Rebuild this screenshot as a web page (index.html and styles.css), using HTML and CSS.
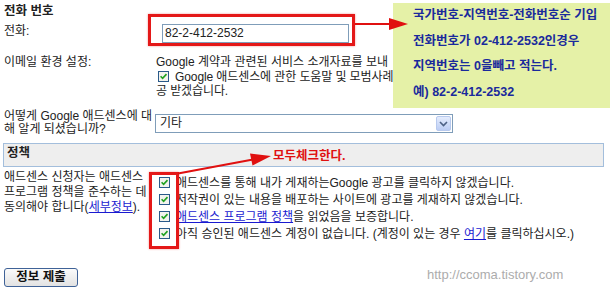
FILE: index.html
```html
<!DOCTYPE html>
<html lang="ko">
<head>
<meta charset="utf-8">
<title>애드센스 신청</title>
<link rel="stylesheet" href="styles.css">
</head>
<body>
<div class="page">
  <div class="sec-title">전화 번호</div>

  <div class="row row-phone">
    <div class="label">전화:</div>
    <div class="field"><div class="textbox">82-2-412-2532</div></div>
  </div>

  <div class="row row-email">
    <div class="label">이메일 환경 설정:</div>
    <div class="field field-email">
      <div class="line">Google 계약과 관련된 서비스 소개자료를 보내</div>
      <div class="check-para"><span class="cb cb-email"><svg width="11" height="11" viewBox="0 0 11 11"><rect x=".5" y=".5" width="10" height="10" fill="#f3f3ee" stroke="#2a5a8a"/><path d="M2.6 5.3 L4.6 7.4 L8.5 3.1" fill="none" stroke="#21a121" stroke-width="1.6"/></svg></span>Google 애드센스에 관한 도움말 및 모범사례<br>공 받겠습니다.</div>
    </div>
  </div>

  <div class="row row-how">
    <div class="label label-how">어떻게 Google 애드센스에 대<br>해 알게 되셨습니까?</div>
    <div class="field">
      <div class="selectbox">
        <span class="select-text">기타</span>
        <span class="select-btn"><svg width="9" height="6" viewBox="0 0 9 6"><path d="M1 1 L4.5 4.5 L8 1" fill="none" stroke="#4d6185" stroke-width="1.6"/></svg></span>
      </div>
    </div>
  </div>

  <div class="policy-head">정책</div>

  <div class="row row-policy">
    <div class="label label-policy">애드센스 신청자는 애드센스<br>프로그램 정책을 준수하는 데<br>동의해야 합니다(<a class="lnk" href="#">세부정보</a>).</div>
    <div class="field checks">
      <div class="check-row"><span class="cb"><svg width="11" height="11" viewBox="0 0 11 11"><rect x=".5" y=".5" width="10" height="10" fill="#f3f3ee" stroke="#2a5a8a"/><path d="M2.6 5.3 L4.6 7.4 L8.5 3.1" fill="none" stroke="#21a121" stroke-width="1.6"/></svg></span>애드센스를 통해 내가 게재하는Google 광고를 클릭하지 않겠습니다.</div>
      <div class="check-row"><span class="cb"><svg width="11" height="11" viewBox="0 0 11 11"><rect x=".5" y=".5" width="10" height="10" fill="#f3f3ee" stroke="#2a5a8a"/><path d="M2.6 5.3 L4.6 7.4 L8.5 3.1" fill="none" stroke="#21a121" stroke-width="1.6"/></svg></span>저작권이 있는 내용을 배포하는 사이트에 광고를 게재하지 않겠습니다.</div>
      <div class="check-row"><span class="cb"><svg width="11" height="11" viewBox="0 0 11 11"><rect x=".5" y=".5" width="10" height="10" fill="#f3f3ee" stroke="#2a5a8a"/><path d="M2.6 5.3 L4.6 7.4 L8.5 3.1" fill="none" stroke="#21a121" stroke-width="1.6"/></svg></span><a class="lnk" href="#">애드센스 프로그램 정책</a>을 읽었음을 보증합니다.</div>
      <div class="check-row"><span class="cb"><svg width="11" height="11" viewBox="0 0 11 11"><rect x=".5" y=".5" width="10" height="10" fill="#f3f3ee" stroke="#2a5a8a"/><path d="M2.6 5.3 L4.6 7.4 L8.5 3.1" fill="none" stroke="#21a121" stroke-width="1.6"/></svg></span>아직 승인된 애드센스 계정이 없습니다. (계정이 있는 경우 <a class="lnk" href="#">여기</a>를 클릭하십시오.)</div>
    </div>
  </div>

  <div class="submit-row"><button class="submit" type="button">정보 제출</button></div>

  <!-- annotation overlays -->
  <div class="mark mark-phone"></div>
  <div class="mark mark-checks"></div>
  <div class="callout">
    <div class="callout-line">국가번호-지역번호-전화번호순 기입</div>
    <div class="callout-line">전화번호가 02-412-2532인경우</div>
    <div class="callout-line">지역번호는 0을빼고 적는다.</div>
    <div class="callout-line">예) 82-2-412-2532</div>
  </div>
  <svg class="arrows" width="610" height="298" viewBox="0 0 610 298">
    <line x1="355" y1="24" x2="392" y2="24" stroke="#e01010" stroke-width="2.2"/>
    <polygon points="389,18 408,24 389,30" fill="#e01010"/>
    <line x1="178" y1="173.5" x2="253" y2="159.5" stroke="#e01010" stroke-width="2.2"/>
    <polygon points="250,153.5 271,156 252.5,165.5" fill="#e01010"/>
  </svg>
  <div class="note-check">모두체크한다.</div>
  <div class="watermark">http://ccoma.tistory.com</div>
</div>
</body>
</html>
```

FILE: styles.css
```css
* { box-sizing: border-box; }

html, body {
  margin: 0;
  padding: 0;
  background: #ffffff;
}

body {
  font-family: "Liberation Sans", "Noto Sans CJK KR", sans-serif;
  font-size: 12px;
  color: #222222;
}

.page {
  position: relative;
  width: 610px;
  height: 298px;
  padding: 4px 4px 0 4px;
  overflow: hidden;
}

.sec-title {
  font-weight: bold;
  font-size: 12.5px;
  line-height: 15px;
}

.row {
  display: flex;
  align-items: flex-start;
}

.label {
  width: 152px;
  flex: none;
  line-height: 15px;
  white-space: nowrap;
}

.field {
  flex: 1;
  min-width: 0;
}

.field-email {
  flex: none;
  width: 236px;
}

.row-phone { margin-top: 5px; }

.textbox {
  margin-left: 6px;
  width: 187px;
  height: 19px;
  border: 1px solid #7f9db9;
  background: #ffffff;
  font-size: 12px;
  line-height: 17px;
  padding-left: 2px;
  color: #222;
}

.row-email { margin-top: 12px; }

.line {
  line-height: 15px;
  white-space: nowrap;
}

.check-para {
  line-height: 14px;
  white-space: nowrap;
  letter-spacing: -0.1px;
}

.cb {
  display: inline-block;
  width: 11px;
  height: 11px;
  vertical-align: -1px;
  margin-right: 6px;
}
.cb svg { display: block; }

.cb-email { margin-left: 2px; }

.row-how { margin-top: 12px; }

.label-how { line-height: 13px; }

.selectbox {
  margin-top: 4px;
  margin-left: -1px;
  width: 298px;
  height: 19px;
  border: 1px solid #7f9db9;
  display: flex;
  align-items: center;
  justify-content: space-between;
  padding: 0 1px 0 4px;
  background: #fff;
}

.select-text {
  font-size: 12px;
  line-height: 17px;
}

.select-btn {
  width: 15px;
  height: 15px;
  border: 1px solid #b7c9ee;
  border-radius: 2px;
  background: linear-gradient(#e4ecfd, #bccdf4);
  display: flex;
  align-items: center;
  justify-content: center;
}
.select-btn svg { display: block; }

.policy-head {
  margin: 7px 2px 0 -1px;
  height: 24px;
  border: 1px solid #a3bedc;
  background: #eeeeee;
  font-weight: bold;
  font-size: 12.5px;
  line-height: 18px;
  padding-left: 3px;
}

.row-policy { margin-top: 3px; }

.checks { padding-top: 4.5px; }

.check-row {
  height: 17px;
  line-height: 17px;
  white-space: nowrap;
  padding-left: 3px;
}

.lnk {
  color: #1a1ad0;
  text-decoration: underline;
}

.submit-row { margin-top: 25.5px; }

.submit {
  width: 74px;
  height: 19px;
  border: 1px solid #3f6297;
  border-radius: 3px;
  background: linear-gradient(#fbfbfb, #e2e2e2);
  font-family: "Liberation Sans", "Noto Sans CJK KR", sans-serif;
  font-weight: bold;
  font-size: 12.5px;
  line-height: 15px;
  color: #111;
  padding: 0;
  margin: 0;
}

/* annotation overlays */
.mark {
  position: absolute;
  border: 3px solid #e41818;
  box-shadow: 0 0 2px rgba(228, 24, 24, 0.45);
}
.mark-phone {
  left: 148px;
  top: 14px;
  width: 207px;
  height: 32px;
}
.mark-checks {
  left: 149px;
  top: 172px;
  width: 30px;
  height: 77px;
}

.callout {
  position: absolute;
  left: 393px;
  top: 3px;
  width: 217px;
  height: 105px;
  background: #e5f1a7;
  padding-left: 20px;
  font-family: "Liberation Sans", "Noto Sans CJK KR", sans-serif;
  font-weight: bold;
  font-size: 12.5px;
  color: #1a2a9c;
}
.callout-line {
  line-height: 25.7px;
  white-space: nowrap;
}

.arrows {
  position: absolute;
  left: 0;
  top: 0;
  pointer-events: none;
}

.note-check {
  position: absolute;
  left: 273px;
  top: 148px;
  font-family: "Liberation Sans", "Noto Sans CJK KR", sans-serif;
  font-weight: bold;
  font-size: 12.5px;
  line-height: 17px;
  color: #e01010;
}

.watermark {
  position: absolute;
  left: 427px;
  top: 267px;
  font-family: "Liberation Sans", sans-serif;
  font-size: 13px;
  line-height: 16px;
  color: #acacac;
}
```
